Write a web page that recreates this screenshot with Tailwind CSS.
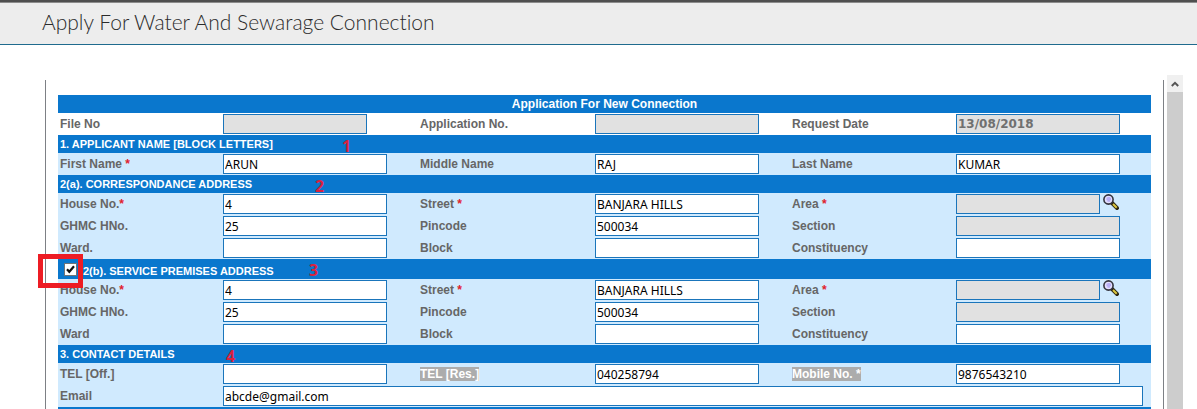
<!DOCTYPE html>
<html lang="en">
<head>
<meta charset="utf-8">
<title>Apply For Water And Sewarage Connection</title>
<script src="https://cdn.jsdelivr.net/npm/@tailwindcss/browser@4"></script>
</head>
<body class="flex h-screen flex-col overflow-hidden bg-white font-['Liberation_Sans',sans-serif] text-xs">
<header class="h-[45px] shrink-0 border-b border-[#1f6b8e] bg-[#ededed]">
  <div class="h-[3px] border-b border-[#8c8c8c] bg-[#4f4f4f]"></div>
  <h1 class="pl-[42px] pt-[3px] font-['Lato',sans-serif] text-[21px] leading-8 font-light text-[#2b2b2b] [font-variant-ligatures:none]">Apply For Water And Sewarage Connection</h1>
</header>
<main class="flex min-h-0 flex-1 pt-[30px] pr-[14px] pl-[45px]">
  <div class="mt-[5px] flex-1 border-x border-[#7d8085] pt-[15px] pr-3 pl-3">
    <form class="font-bold text-[#666]">
      <h2 class="bg-[#0a77cd] text-center leading-[18px] text-white">Application For New Connection</h2>
      <div class="grid grid-cols-[163fr_197fr_175fr_197fr_164fr_197fr] items-center *:h-[22px] *:px-[2px] *:leading-[22px]">
        <div><label for="file">File No</label></div>
        <div class="flex items-center"><input id="file" readonly class="h-5 w-36 border border-[#1a75bb] bg-[#e1e1e1] px-px"></div>
        <div><label for="appno">Application No.</label></div>
        <div class="flex items-center"><input id="appno" readonly class="h-5 w-41 border border-[#1a75bb] bg-[#e1e1e1] px-px"></div>
        <div><label for="date">Request Date</label></div>
        <div class="flex items-center"><input id="date" readonly value="13/08/2018" class="h-5 w-41 border border-[#1a75bb] bg-[#e1e1e1] px-px font-['DejaVu_Sans',sans-serif] text-xs font-bold text-[#707070]"></div>
      </div>

      <h3 class="relative bg-[#0a77cd] pl-[2px] text-[11px] leading-[18px] text-white">1. APPLICANT NAME [BLOCK LETTERS]<span class="absolute top-[2px] left-[284px] font-['Noto_Sans',sans-serif] text-base leading-[18px] text-[#d9213f]">1</span></h3>
      <div class="grid grid-cols-[163fr_197fr_175fr_197fr_164fr_197fr] items-center bg-[#d0eafe] *:h-[22px] *:px-[2px] *:leading-[22px]">
        <div><label for="first">First Name <span class="text-[#e0202c]">*</span></label></div>
        <div class="flex items-center"><input id="first" value="ARUN" class="h-5 w-41 border border-[#1a75bb] bg-white px-px font-['Noto_Sans',sans-serif] text-xs font-normal text-black"></div>
        <div><label for="middle">Middle Name</label></div>
        <div class="flex items-center"><input id="middle" value="RAJ" class="h-5 w-41 border border-[#1a75bb] bg-white px-px font-['Noto_Sans',sans-serif] text-xs font-normal text-black"></div>
        <div><label for="last">Last Name</label></div>
        <div class="flex items-center"><input id="last" value="KUMAR" class="h-5 w-41 border border-[#1a75bb] bg-white px-px font-['Noto_Sans',sans-serif] text-xs font-normal text-black"></div>
      </div>

      <h3 class="relative bg-[#0a77cd] pl-[2px] text-[11px] leading-[18px] text-white">2(a). CORRESPONDANCE ADDRESS<span class="absolute top-[2px] left-[257px] font-['Noto_Sans',sans-serif] text-base leading-[18px] text-[#d9213f]">2</span></h3>
      <div class="grid grid-cols-[163fr_197fr_175fr_197fr_164fr_197fr] items-center bg-[#d0eafe] *:h-[22px] *:px-[2px] *:leading-[22px]">
        <div><label for="house">House No.<span class="text-[#e0202c]">*</span></label></div>
        <div class="flex items-center"><input id="house" value="4" class="h-5 w-41 border border-[#1a75bb] bg-white px-px font-['Noto_Sans',sans-serif] text-xs font-normal text-black"></div>
        <div><label for="street">Street <span class="text-[#e0202c]">*</span></label></div>
        <div class="flex items-center"><input id="street" value="BANJARA HILLS" class="h-5 w-41 border border-[#1a75bb] bg-white px-px font-['Noto_Sans',sans-serif] text-xs font-normal text-black"></div>
        <div><label for="area">Area <span class="text-[#e0202c]">*</span></label></div>
        <div class="flex items-center gap-[3px]"><input id="area" readonly class="h-5 w-36 border border-[#1a75bb] bg-[#e1e1e1] px-px"><button type="button" aria-label="Find area" class="flex h-5 w-4 items-start"><svg class="block" width="16" height="16" viewBox="0 0 16 16" fill="none"><path d="M9.5 9.5 14 14" stroke="#2b2611" stroke-width="4" stroke-linecap="square"/><path d="M10 10 13.7 13.7" stroke="#dcc640" stroke-width="2"/><circle cx="5.5" cy="5.5" r="4.6" fill="#e3defd" stroke="#33333d" stroke-width="1.6"/><path d="M3.5 5h4.5M5.7 3v4.8" stroke="#b8aef5" stroke-width="2.6"/></svg></button></div>

        <div><label for="ghmc">GHMC HNo.</label></div>
        <div class="flex items-center"><input id="ghmc" value="25" class="h-5 w-41 border border-[#1a75bb] bg-white px-px font-['Noto_Sans',sans-serif] text-xs font-normal text-black"></div>
        <div><label for="pin">Pincode</label></div>
        <div class="flex items-center"><input id="pin" value="500034" class="h-5 w-41 border border-[#1a75bb] bg-white px-px font-['Noto_Sans',sans-serif] text-xs font-normal text-black"></div>
        <div><label for="section">Section</label></div>
        <div class="flex items-center"><input id="section" readonly class="h-5 w-41 border border-[#1a75bb] bg-[#e1e1e1] px-px"></div>

        <div><label for="ward">Ward.</label></div>
        <div class="flex items-center"><input id="ward" class="h-5 w-41 border border-[#1a75bb] bg-white px-px"></div>
        <div><label for="block">Block</label></div>
        <div class="flex items-center"><input id="block" class="h-5 w-41 border border-[#1a75bb] bg-white px-px"></div>
        <div><label for="const">Constituency</label></div>
        <div class="flex items-center"><input id="const" class="h-5 w-41 border border-[#1a75bb] bg-white px-px"></div>
      </div>

      <h3 class="relative flex h-5 items-center bg-[#0a77cd] pl-[6px] text-[11px] text-white">
        <span class="relative mr-[6px] block size-[13px]"><input id="same" type="checkbox" checked class="block size-[13px] appearance-none border border-[#6e7378] bg-white"><svg class="pointer-events-none absolute inset-0" width="13" height="13" viewBox="0 0 13 13" fill="none"><path d="M3 6.2 5.3 8.8 10 3.2" stroke="#111" stroke-width="2.2"/></svg></span>
        <label for="same" class="pt-1 leading-4">2(b). SERVICE PREMISES ADDRESS</label>
        <span class="pointer-events-none absolute -top-[5px] -left-5 z-10 h-[34px] w-[45px] border-[5px] border-[#ed1c24]"></span>
        <span class="absolute top-[2px] left-[251px] font-['Noto_Sans',sans-serif] text-base leading-[18px] text-[#d9213f]">3</span>
      </h3>
      <div class="grid grid-cols-[163fr_197fr_175fr_197fr_164fr_197fr] items-center bg-[#d0eafe] *:h-[22px] *:px-[2px] *:leading-[22px]">
        <div><label for="house2">House No.<span class="text-[#e0202c]">*</span></label></div>
        <div class="flex items-center"><input id="house2" value="4" class="h-5 w-41 border border-[#1a75bb] bg-white px-px font-['Noto_Sans',sans-serif] text-xs font-normal text-black"></div>
        <div><label for="street2">Street <span class="text-[#e0202c]">*</span></label></div>
        <div class="flex items-center"><input id="street2" value="BANJARA HILLS" class="h-5 w-41 border border-[#1a75bb] bg-white px-px font-['Noto_Sans',sans-serif] text-xs font-normal text-black"></div>
        <div><label for="area2">Area <span class="text-[#e0202c]">*</span></label></div>
        <div class="flex items-center gap-[3px]"><input id="area2" readonly class="h-5 w-36 border border-[#1a75bb] bg-[#e1e1e1] px-px"><button type="button" aria-label="Find area" class="flex h-5 w-4 items-start"><svg class="block" width="16" height="16" viewBox="0 0 16 16" fill="none"><path d="M9.5 9.5 14 14" stroke="#2b2611" stroke-width="4" stroke-linecap="square"/><path d="M10 10 13.7 13.7" stroke="#dcc640" stroke-width="2"/><circle cx="5.5" cy="5.5" r="4.6" fill="#e3defd" stroke="#33333d" stroke-width="1.6"/><path d="M3.5 5h4.5M5.7 3v4.8" stroke="#b8aef5" stroke-width="2.6"/></svg></button></div>

        <div><label for="ghmc2">GHMC HNo.</label></div>
        <div class="flex items-center"><input id="ghmc2" value="25" class="h-5 w-41 border border-[#1a75bb] bg-white px-px font-['Noto_Sans',sans-serif] text-xs font-normal text-black"></div>
        <div><label for="pin2">Pincode</label></div>
        <div class="flex items-center"><input id="pin2" value="500034" class="h-5 w-41 border border-[#1a75bb] bg-white px-px font-['Noto_Sans',sans-serif] text-xs font-normal text-black"></div>
        <div><label for="section2">Section</label></div>
        <div class="flex items-center"><input id="section2" readonly class="h-5 w-41 border border-[#1a75bb] bg-[#e1e1e1] px-px"></div>

        <div><label for="ward2">Ward</label></div>
        <div class="flex items-center"><input id="ward2" class="h-5 w-41 border border-[#1a75bb] bg-white px-px"></div>
        <div><label for="block2">Block</label></div>
        <div class="flex items-center"><input id="block2" class="h-5 w-41 border border-[#1a75bb] bg-white px-px"></div>
        <div><label for="const2">Constituency</label></div>
        <div class="flex items-center"><input id="const2" class="h-5 w-41 border border-[#1a75bb] bg-white px-px"></div>
      </div>

      <h3 class="relative bg-[#0a77cd] pl-[2px] text-[11px] leading-[18px] text-white">3. CONTACT DETAILS<span class="absolute top-[2px] left-[168px] font-['Noto_Sans',sans-serif] text-base leading-[18px] text-[#d9213f]">4</span></h3>
      <div class="grid grid-cols-[163fr_197fr_175fr_197fr_164fr_197fr] items-center bg-[#d0eafe] *:h-[22px] *:px-[2px] *:leading-[22px]">
        <div><label for="teloff">TEL [Off.]</label></div>
        <div class="flex items-center"><input id="teloff" class="h-5 w-41 border border-[#1a75bb] bg-white px-px"></div>
        <div><label for="telres" class="bg-[#acacac] text-white">TEL [Res.]</label></div>
        <div class="flex items-center"><input id="telres" value="040258794" class="h-5 w-41 border border-[#1a75bb] bg-white px-px font-['Noto_Sans',sans-serif] text-xs font-normal text-black"></div>
        <div><label for="mobile" class="bg-[#acacac] text-white">Mobile No. *</label></div>
        <div class="flex items-center"><input id="mobile" value="9876543210" class="h-5 w-41 border border-[#1a75bb] bg-white px-px font-['Noto_Sans',sans-serif] text-xs font-normal text-black"></div>
        <div><label for="email">Email</label></div>
        <div class="col-span-5 flex items-center"><input id="email" value="abcde@gmail.com" class="mr-[6px] h-5 flex-1 border border-[#1a75bb] bg-white px-px font-['Noto_Sans',sans-serif] text-xs font-normal text-black"></div>
      </div>
      <div class="h-[18px] bg-[#0a77cd]"></div>
    </form>
  </div>
  <div class="ml-[3px] w-4 bg-[#cdcdcd]">
    <button type="button" aria-label="Scroll up" class="flex h-[17px] w-4 items-center justify-center bg-[#f0f0f0]"><svg width="8" height="6" viewBox="0 0 8 6" fill="none"><path d="M.8 5 4 1.8 7.2 5" stroke="#555" stroke-width="2"/></svg></button>
  </div>
</main>
</body>
</html>
